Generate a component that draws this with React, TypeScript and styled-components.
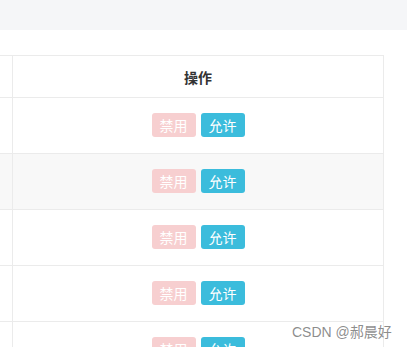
import styled, { createGlobalStyle } from "styled-components";

const GlobalStyle = createGlobalStyle`
  html, body {
    margin: 0;
    padding: 0;
    background: #ffffff;
    font-family: "Noto Sans CJK SC", "Noto Sans", sans-serif;
    overflow: hidden;
  }
`;

const Page = styled.div`
  position: relative;
  width: 407px;
  height: 347px;
  overflow: hidden;
`;

const TopBand = styled.div`
  height: 30px;
  background: #f5f6f8;
`;

const TableWrap = styled.div`
  padding: 25px 23px 0 0;
`;

const Table = styled.div`
  border-top: 1px solid #ebebeb;
  border-right: 1px solid #ebebeb;
`;

const Row = styled.div<{ $hovered?: boolean; $header?: boolean }>`
  display: grid;
  grid-template-columns: 13px 1fr;
  height: ${(p) => (p.$header ? "42px" : "56px")};
  background: ${(p) => (p.$hovered ? "#f8f8f8" : "#ffffff")};
`;

const Cell = styled.div`
  box-sizing: border-box;
  border-bottom: 1px solid #ebebeb;
  border-right: 1px solid #ebebeb;
  display: flex;
  align-items: center;
  justify-content: center;
  gap: 5px;

  &:last-child {
    border-right: none;
  }
`;

const HeaderText = styled.span`
  font-size: 14px;
  font-weight: 700;
  color: #333333;
  padding-top: 1px;
`;

const ActionButton = styled.button<{ $kind: "off" | "on" }>`
  box-sizing: border-box;
  height: 24px;
  padding: 0 8px;
  margin-top: -2px;
  border: none;
  border-radius: 3px;
  font-family: inherit;
  font-size: 14px;
  line-height: 24px;
  color: #ffffff;
  background: ${(p) => (p.$kind === "off" ? "#f7cfd0" : "#3bbcdc")};
  cursor: pointer;
`;

const Watermark = styled.div`
  position: absolute;
  left: 292px;
  top: 321px;
  font-family: "Liberation Sans", "Noto Sans CJK SC", sans-serif;
  font-size: 14px;
  color: rgba(120, 120, 120, 0.85);
  white-space: nowrap;
`;

const rows = [0, 1, 2, 3, 4];

export default function App() {
  return (
    <Page>
      <GlobalStyle />
      <TopBand />
      <TableWrap>
        <Table>
          <Row $header>
            <Cell />
            <Cell>
              <HeaderText>操作</HeaderText>
            </Cell>
          </Row>
          {rows.map((i) => (
            <Row key={i} $hovered={i === 1}>
              <Cell />
              <Cell>
                <ActionButton $kind="off">禁用</ActionButton>
                <ActionButton $kind="on">允许</ActionButton>
              </Cell>
            </Row>
          ))}
        </Table>
      </TableWrap>
      <Watermark>CSDN @郝晨好</Watermark>
    </Page>
  );
}
